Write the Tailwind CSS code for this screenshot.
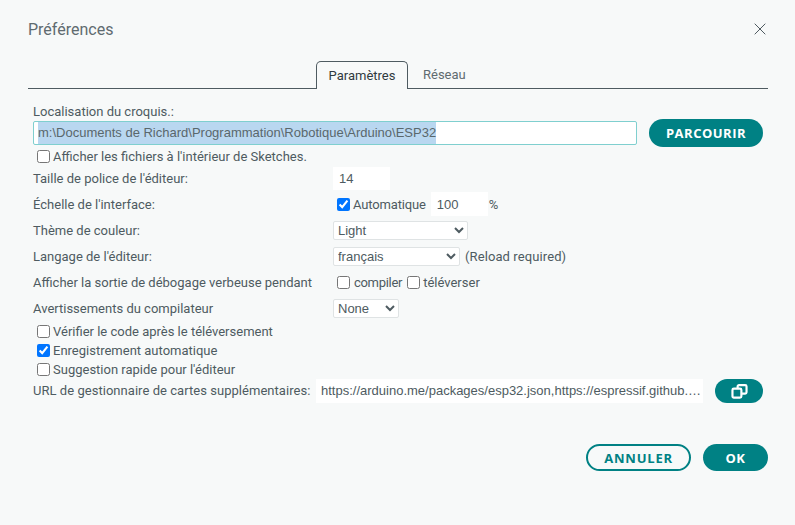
<!DOCTYPE html>
<html lang="fr">
<head>
<meta charset="utf-8">
<script src="https://cdn.jsdelivr.net/npm/@tailwindcss/browser@4"></script>
</head>
<body class="w-[795px] h-[525px] overflow-hidden bg-[#f7f9f9] font-['Roboto',sans-serif] text-[13px] leading-[16px] text-[#4e5b61]">
<div class="flex flex-col h-full pl-[28px] pr-[27px]">
  <header class="flex items-center justify-between h-[22px] mt-[18px] pr-[2px]">
    <h1 class="text-[16px] leading-[22px] font-normal text-[#5f6b70] pt-[2px]">Préférences</h1>
    <svg class="w-[12px] h-[12px]" viewBox="0 0 12 12" fill="none" stroke="#4e5b61" stroke-width="1"><path d="M.7.7l10.6 10.6M11.3.7.7 11.3"/></svg>
  </header>
  <nav class="flex h-[28px] mt-[21px] border-b border-[#4e5b61] pl-[288px]">
    <div class="w-[92px] h-[28px] shrink-0 bg-[#f7f9f9] border border-b-0 border-[#4e5b61] rounded-t-[5px] flex items-center justify-center text-[#2f3a40]">Paramètres</div>
    <div class="h-[27px] shrink-0 ml-[15px] flex items-center text-[#5f6b70]">Réseau</div>
  </nav>
  <main class="pl-[5px] pr-[5px]">
    <div class="h-[15px] mt-[15px]">Localisation du croquis.:</div>
    <div class="flex items-center gap-[12px] h-[28px]">
      <div class="w-[604px] h-[24px] bg-white border border-[#7fcfcf] rounded-[2px] pl-[4px] flex items-center font-['Liberation_Sans',sans-serif]"><span class="bg-[#b9d7f0] leading-[22px] text-[#5a676c]">m:\Documents de Richard\Programmation\Robotique\Arduino\ESP32</span></div>
      <button class="w-[114px] h-[28px] rounded-full bg-[#008184] text-white font-['Open_Sans',sans-serif] font-bold text-[13px] tracking-[0.5px]">PARCOURIR</button>
    </div>
    <label class="flex items-center h-[18px] pl-[4px] gap-[3px]"><input type="checkbox" class="m-0"><span class="pt-[2px]">Afficher les fichiers à l'intérieur de Sketches.</span></label>
    <div class="flex items-center h-[26px]"><span class="w-[300px] pt-[2px]">Taille de police de l'éditeur:</span><input value="14" class="w-[57px] h-[23px] bg-white pl-[6px] outline-none font-['Liberation_Sans',sans-serif]"></div>
    <div class="flex items-center h-[26px]">
      <span class="w-[300px] pt-[2px]">Échelle de l'interface:</span>
      <label class="flex items-center gap-[3px] pl-[4px] tracking-[-0.15px]"><input type="checkbox" checked class="m-0"><span class="pt-[2px]">Automatique</span></label>
      <input value="100" class="w-[57px] h-[24px] bg-white pl-[6px] ml-[5px] outline-none font-['Liberation_Sans',sans-serif]"><span class="ml-[1px] pt-[2px]">%</span>
    </div>
    <div class="flex items-center h-[26px]"><span class="w-[300px] pt-[2px]">Thème de couleur:</span>
      <select class="w-[135px] h-[19px] bg-white border border-[#dfe3e4] rounded-[2px] text-[13px] font-['Liberation_Sans',sans-serif]"><option>Light</option></select></div>
    <div class="flex items-center h-[26px]"><span class="w-[300px] pt-[2px]">Langage de l'éditeur:</span>
      <select class="w-[127px] h-[19px] bg-white border border-[#dfe3e4] rounded-[2px] text-[13px] font-['Liberation_Sans',sans-serif]"><option>français</option></select>
      <span class="ml-[5px] pt-[2px] tracking-[0.1px]">(Reload required)</span></div>
    <div class="flex items-center h-[26px]"><span class="w-[300px] pt-[2px]">Afficher la sortie de débogage verbeuse pendant</span>
      <label class="flex items-center gap-[4px] pl-[4px] tracking-[-0.3px]"><input type="checkbox" class="m-0"><span class="pt-[2px]">compiler</span></label>
      <label class="flex items-center gap-[3px] pl-[5px]"><input type="checkbox" class="m-0"><span class="pt-[2px]">téléverser</span></label></div>
    <div class="flex items-center h-[26px]"><span class="w-[300px] pt-[2px]">Avertissements du compilateur</span>
      <select class="w-[66px] h-[19px] bg-white border border-[#dfe3e4] rounded-[2px] text-[13px] font-['Liberation_Sans',sans-serif]"><option>None</option></select></div>
    <label class="flex items-center h-[19px] pl-[4px] gap-[3px] mt-[1px]"><input type="checkbox" class="m-0">Vérifier le code après le téléversement</label>
    <label class="flex items-center h-[19px] pl-[4px] gap-[3px]"><input type="checkbox" checked class="m-0">Enregistrement automatique</label>
    <label class="flex items-center h-[19px] pl-[4px] gap-[3px]"><input type="checkbox" class="m-0">Suggestion rapide pour l'éditeur</label>
    <div class="flex items-center h-[24px]">
      <span class="w-[283px] tracking-[0.04px]">URL de gestionnaire de cartes supplémentaires:</span>
      <div class="w-[387px] h-[24px] bg-white pl-[5px] flex items-center whitespace-nowrap font-['Liberation_Sans',sans-serif]">https://arduino.me/packages/esp32.json,https://espressif.github.…</div>
      <button class="w-[48px] h-[24px] ml-[12px] rounded-full bg-[#008184] flex items-center justify-center" aria-label="Ouvrir">
        <svg class="w-[17px] h-[15px]" viewBox="0 0 18 16" fill="none" stroke="#fff" stroke-width="2.3"><rect x="7" y="1.2" width="9.5" height="9" rx="1.5"/><rect x="1.5" y="5" width="9.5" height="9.5" rx="1.5" fill="#008184"/></svg>
      </button>
    </div>
  </main>
  <footer class="flex justify-end gap-[12px] mt-[41px]">
    <button class="w-[105px] h-[27px] rounded-full border-2 border-[#008184] text-[#008184] font-['Open_Sans',sans-serif] font-bold text-[13px] tracking-[0.8px]">ANNULER</button>
    <button class="w-[65px] h-[27px] rounded-full bg-[#008184] text-white font-['Open_Sans',sans-serif] font-bold text-[13px] tracking-[0.5px]">OK</button>
  </footer>
</div>
</body>
</html>
